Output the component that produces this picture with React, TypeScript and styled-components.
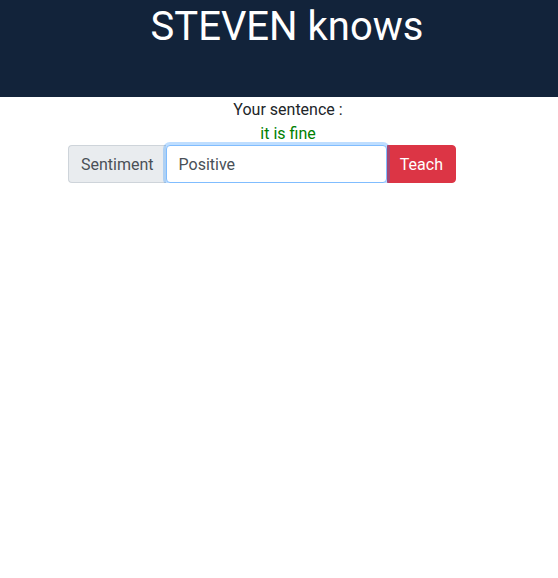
import React from "react";
import styled, { createGlobalStyle } from "styled-components";

const Global = createGlobalStyle`
  html, body { margin: 0; padding: 0; background: #fff; }
  body {
    font-family: Roboto, "Liberation Sans", Arial, sans-serif;
    font-size: 16px;
    line-height: 1.5;
    color: #212529;
  }
  * { box-sizing: border-box; }
`;

const Header = styled.header`
  background: #12233a;
  height: 97px;
  padding-left: 16px;
  display: flex;
  justify-content: center;
`;

const Title = styled.h1`
  margin: 0;
  padding-top: 3px;
  font-size: 40px;
  font-weight: 400;
  line-height: 48px;
  color: #fff;
`;

const Main = styled.main`
  display: flex;
  flex-direction: column;
`;

const Line = styled.div<{ $color?: string }>`
  padding-left: 18px;
  text-align: center;
  color: ${(p) => p.$color || "#212529"};
  height: 24px;
  line-height: 26px;
`;

const InputGroup = styled.div`
  display: flex;
  margin-left: 68px;
  width: 388px;
  height: 38px;
`;

const Addon = styled.span`
  display: flex;
  align-items: center;
  padding: 1px 12px 0;
  background: #e9ecef;
  border: 1px solid #ced4da;
  border-right: none;
  border-radius: 4px 0 0 4px;
  color: #495057;
  white-space: nowrap;
`;

const Input = styled.input`
  flex: 1;
  min-width: 0;
  padding: 1px 12px 0;
  font: inherit;
  color: #495057;
  border: 1px solid #80bdff;
  border-radius: 4px;
  outline: none;
  box-shadow: 0 0 0 3px rgba(0, 123, 255, 0.25);
  position: relative;
  z-index: 1;
`;

const Button = styled.button`
  padding: 1px 12px 0;
  font: inherit;
  color: #fff;
  background: #dc3545;
  border: 1px solid #dc3545;
  border-radius: 0 4px 4px 0;
`;

export default function App() {
  return (
    <>
      <Global />
      <Header>
        <Title>STEVEN knows</Title>
      </Header>
      <Main>
        <Line>Your sentence :</Line>
        <Line $color="#008000">it is fine</Line>
        <InputGroup>
          <Addon>Sentiment</Addon>
          <Input defaultValue="Positive" />
          <Button>Teach</Button>
        </InputGroup>
      </Main>
    </>
  );
}
